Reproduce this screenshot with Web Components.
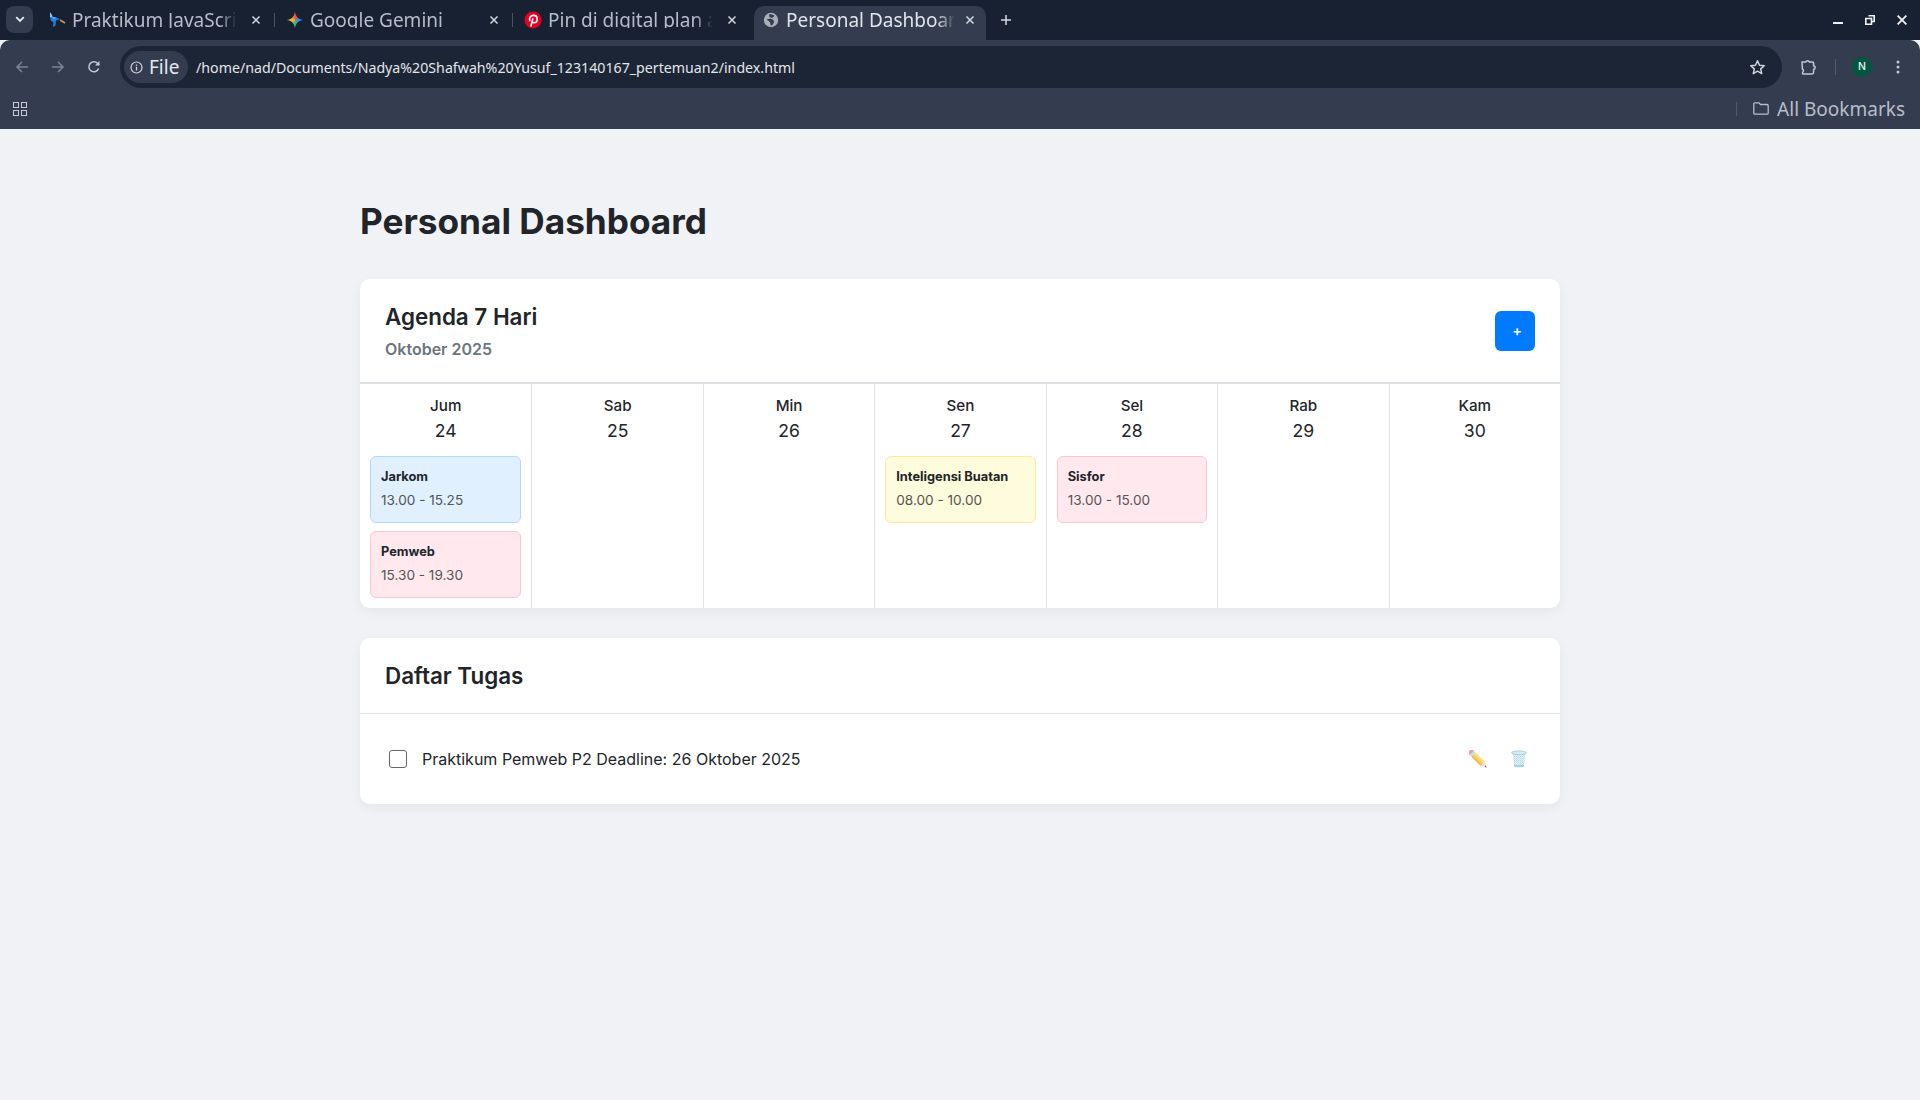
<!DOCTYPE html>
<html lang="id"><head><meta charset="utf-8"><title>Personal Dashboard</title>
<style>
html,body{margin:0;padding:0;height:100%;background:#f0f2f5}
body{width:1920px;height:1100px;overflow:hidden;display:flex;flex-direction:column;font-family:Inter,"Liberation Sans",sans-serif}
browser-tabs,browser-toolbar,bookmark-bar{flex:none}
dash-page{flex:1}
</style></head><body>
<browser-tabs></browser-tabs>
<browser-toolbar></browser-toolbar>
<bookmark-bar></bookmark-bar>
<dash-page>
  <agenda-card>
    <day-col name="Jum" num="24" first>
      <event-card tone="blue" title-text="Jarkom" time="13.00 - 15.25"></event-card>
      <event-card tone="pink" title-text="Pemweb" time="15.30 - 19.30"></event-card>
    </day-col>
    <day-col name="Sab" num="25"></day-col>
    <day-col name="Min" num="26"></day-col>
    <day-col name="Sen" num="27">
      <event-card tone="yellow" title-text="Inteligensi Buatan" time="08.00 - 10.00"></event-card>
    </day-col>
    <day-col name="Sel" num="28">
      <event-card tone="pink" title-text="Sisfor" time="13.00 - 15.00"></event-card>
    </day-col>
    <day-col name="Rab" num="29"></day-col>
    <day-col name="Kam" num="30"></day-col>
  </agenda-card>
  <task-card>
    <task-item text="Praktikum Pemweb P2 Deadline: 26 Oktober 2025"></task-item>
  </task-card>
</dash-page>
<script>
function def(name, html, init){
  customElements.define(name, class extends HTMLElement{
    constructor(){super();this.attachShadow({mode:'open'});}
    connectedCallback(){
      this.shadowRoot.innerHTML = typeof html==='function'?html(this):html;
      if(init)init(this);
    }
  });
}
const attr=(e,n)=>e.getAttribute(n)||'';

const closeX=`<svg width="10" height="10" viewBox="0 0 10 10"><path d="M1.500 1.500l7 7M8.500 1.500l-7 7" stroke="currentColor" stroke-width="1.500" fill="none"/></svg>`;
const favs={
 js:`<svg width="18" height="18" viewBox="0 0 18 18"><path d="M2 1l2 3 .5 2L2 6z" fill="#8ec8f2"/><path d="M2 6h5l5 2-4 1.500-.5 5-2.500 1.500 .5-5L3 10z" fill="#1f82e6"/><path d="M3.500 5.500L8 6.500 6 8.500z" fill="#5fb2f2"/><path d="M12 9l5 3" stroke="#c39b3e" stroke-width="1.800"/></svg>`,
 gem:`<span style="display:block;width:17px;height:17px;background:conic-gradient(from 0deg,#e8503f 0deg,#3f86f0 70deg,#2f9be8 130deg,#3fb56a 190deg,#8cc04c 230deg,#f2b73a 280deg,#f0883a 320deg,#e8503f 360deg);clip-path:path('M8.500 0C9 5 12 8 17 8.500 12 9 9 12 8.500 17 8 12 5 9 0 8.500 5 8 8 5 8.500 0z')"></span>`,
 pin:`<svg width="18" height="18" viewBox="0 0 18 18"><circle cx="9" cy="9" r="8.500" fill="#e60023"/><path d="M7 15l1.700-7M5.800 9.600C4.800 6.700 6.800 4.400 9.300 4.400c2.400 0 3.900 1.600 3.900 3.600 0 2.200-1.300 3.800-3 3.800-.9 0-1.600-.6-1.700-1.300" stroke="#fff" stroke-width="1.600" fill="none" stroke-linecap="round"/></svg>`,
 globe:`<svg width="16" height="16" viewBox="0 0 16 16"><circle cx="8" cy="8" r="7.200" fill="#a9afba"/><path d="M6 2.500c2.500-.5 4.500.5 5.500 1.500L9 6 6.500 5zM3.500 7.500l4-1 3 1.500.5 2.500-2 3-1.500-.5-.5-3z" fill="#343d4f"/></svg>`};
def('browser-tab', e=>`<style>
:host{display:flex;align-items:center;flex:none;height:34px;padding-bottom:6px;box-sizing:border-box;position:relative;color:#b6bcc8}
:host([active]){background:#343d4f;border-radius:10px 10px 0 0;color:#dfe3ea}
:host([active]) .x{margin-left:10px}
.f{flex:none;width:18px;height:18px;display:flex;align-items:center;justify-content:center;margin-right:6px}
.t{flex:1;min-width:0;height:16px;overflow:hidden;white-space:nowrap;font:19px/16px "Noto Sans",sans-serif;-webkit-mask-image:linear-gradient(90deg,#000 calc(100% - 18px),transparent 100%);mask-image:linear-gradient(90deg,#000 calc(100% - 18px),transparent 100%)}
.x{flex:none;width:10px;height:10px;display:flex;color:#d4d8e0;margin-left:14px}
</style><span class="f">${favs[attr(e,'fav')]}</span><span class="t">${attr(e,'label')}</span><span class="x">${closeX}</span>`);

def('browser-tabs',`<style>
:host{display:flex;height:40px;background:#182132;box-sizing:border-box;padding:6px 13px 0 6px;align-items:flex-start;position:relative}
.sw{width:27px;height:27px;border-radius:8px;background:#343d4f;display:flex;align-items:center;justify-content:center;flex:none;margin-right:15px;color:#e6e9ef}
.sep{flex:none;width:1px;height:14px;background:#4a5262;margin-top:7px}
browser-tab{height:34px}
.t1{width:213px;margin-right:13px}.t2{width:213px;margin-left:11px;margin-right:13px}.t3{width:213px;margin-left:11px;margin-right:17px}
.t4{width:232px;padding-left:8px;padding-right:11px}
.plus{flex:none;margin:8px 0 0 14px;color:#d4d8e0;display:flex}
.grow{flex:1}
.wc{display:flex;align-items:center;gap:22px;margin-top:7px;color:#f2f4f7;height:14px}
</style>
<div class="sw"><svg width="10" height="7" viewBox="0 0 10 7"><path d="M1.200 1.200L5 5l3.800-3.800" fill="none" stroke="currentColor" stroke-width="1.800"/></svg></div>
<browser-tab class="t1" fav="js" label="Praktikum JavaScript"></browser-tab><span class="sep"></span>
<browser-tab class="t2" fav="gem" label="Google Gemini"></browser-tab><span class="sep"></span>
<browser-tab class="t3" fav="pin" label="Pin di digital plan app"></browser-tab>
<browser-tab class="t4" active fav="globe" label="Personal Dashboard"></browser-tab>
<span class="plus"><svg width="12" height="12" viewBox="0 0 12 12"><path d="M6 1v10M1 6h10" stroke="currentColor" stroke-width="1.500"/></svg></span>
<span class="grow"></span>
<span class="wc">
<svg width="10" height="10" viewBox="0 0 10 10"><path d="M0 8h10" stroke="currentColor" stroke-width="2"/></svg>
<svg width="10" height="10" viewBox="0 0 10 10"><path d="M3.500.8h5.700v5.700H6.500M.8 3.500h5.700v5.700H.8z" fill="none" stroke="currentColor" stroke-width="1.600"/></svg>
<svg width="10" height="10" viewBox="0 0 10 10"><path d="M.6.600l8.800 8.800M9.400.600L.6 9.400" stroke="currentColor" stroke-width="1.800"/></svg>
</span>`);

def('browser-toolbar',`<style>
:host{display:flex;align-items:center;height:48px;box-sizing:border-box;padding:6px 0 0 0;background:#343d4f;border-radius:10px 10px 0 0;font-family:"Noto Sans",sans-serif}
.nav{flex:none;width:36px;display:flex;justify-content:center;color:#7d8594}
.nav.r{color:#c4c9d3}
.lead{flex:none;width:4px}
.omni{flex:1;margin-left:8px;height:42px;background:#1c2535;border-radius:21px;display:flex;align-items:center;box-sizing:border-box;padding:0 16px 0 4px;min-width:0}
.chip{flex:none;display:flex;align-items:center;gap:6px;height:32px;width:64px;box-sizing:border-box;padding-left:6px;border-radius:16px;background:#343d4f;color:#e6e9ef;font-size:19px}
.url{flex:1;margin-left:8px;color:#e3e6ec;font-size:14.2px;white-space:nowrap}
.end{flex:none;display:flex;align-items:center;color:#c4c9d3;width:138px}
.pz{margin-left:18px;display:flex}.s{width:1px;height:16px;background:#535b6b;margin-left:18px}
.av{width:20px;height:20px;border-radius:50%;background:#03563f;color:#e6f2ee;font:500 10.500px/20px Inter,sans-serif;text-align:center;margin-left:16px}
.dots{margin-left:24px;display:flex}
</style>
<span class="lead"></span>
<span class="nav"><svg width="14" height="14" viewBox="0 0 14 14"><path d="M13 7H2M7 2L2 7l5 5" fill="none" stroke="currentColor" stroke-width="1.500"/></svg></span>
<span class="nav"><svg width="14" height="14" viewBox="0 0 14 14"><path d="M1 7h11M7 2l5 5-5 5" fill="none" stroke="currentColor" stroke-width="1.500"/></svg></span>
<span class="nav r"><svg width="14" height="14" viewBox="0 0 14 14"><path d="M11.600 8.500A5 5 0 1 1 10.500 3.300L12 5" fill="none" stroke="currentColor" stroke-width="1.500"/><path d="M12.500 1v4.500H8z" fill="currentColor"/></svg></span>
<div class="omni">
 <span class="chip"><svg width="13" height="13" viewBox="0 0 13 13"><circle cx="6.500" cy="6.500" r="5.500" fill="none" stroke="#d0d4dc" stroke-width="1.200"/><path d="M6.500 5.800v3.700M6.500 3.400v1.300" stroke="#d0d4dc" stroke-width="1.300"/></svg><span>File</span></span>
 <span class="url">/home/nad/Documents/Nadya%20Shafwah%20Yusuf_123140167_pertemuan2/index.html</span>
 <svg width="17" height="17" viewBox="0 0 17 17" style="flex:none"><path d="M8.500 1.800l2 4.400 4.800.5-3.600 3.200 1 4.700-4.200-2.400-4.200 2.400 1-4.700L1.700 6.700l4.800-.5z" fill="none" stroke="#d0d4dc" stroke-width="1.500" stroke-linejoin="round"/></svg>
</div>
<div class="end">
 <span class="pz"><svg width="17" height="17" viewBox="0 0 17 17"><path d="M2 3h3.800a1.900 1.900 0 0 1 3.600 0h3a1.200 1.200 0 0 1 1.200 1.200V7a1.600 1.600 0 0 1 0 3.200v3.100a1.700 1.700 0 0 1-1.700 1.700H3.200a1.200 1.200 0 0 1-.5-1.800C3.800 12 3.600 10.500 2.400 10z" fill="none" stroke="currentColor" stroke-width="1.500" stroke-linejoin="round"/></svg></span>
 <span class="s"></span><span class="av">N</span>
 <span class="dots"><svg width="4" height="14" viewBox="0 0 4 14"><circle cx="2" cy="2" r="1.500" fill="currentColor"/><circle cx="2" cy="7" r="1.500" fill="currentColor"/><circle cx="2" cy="12" r="1.500" fill="currentColor"/></svg></span>
</div>`);

def('bookmark-bar',`<style>
:host{display:flex;align-items:center;height:41px;background:#343d4f;box-sizing:border-box;padding:0 15px 0 13px;color:#b8bdc9;font-family:"Noto Sans",sans-serif}
.g{display:grid;grid-template-columns:6px 6px;gap:2px;flex:none}.g i{display:block;width:4px;height:4px;border:1px solid #c4c9d3}
.grow{flex:1}
.s{width:1px;height:14px;background:#535b6b;margin-right:16px}
.fold{display:flex;margin-right:8px}
.l{font-size:19px;line-height:26px;white-space:nowrap}
</style><span class="g"><i></i><i></i><i></i><i></i></span><span class="grow"></span><span class="s"></span>
<span class="fold"><svg width="16" height="13" viewBox="0 0 16 13"><path d="M.8 2A1.200 1.200 0 0 1 2 .8h4l1.500 1.700H14A1.200 1.200 0 0 1 15.200 3.700V11A1.200 1.200 0 0 1 14 12.200H2A1.200 1.200 0 0 1 .8 11z" fill="none" stroke="currentColor" stroke-width="1.300"/></svg></span><span class="l">All Bookmarks</span>`);

def('dash-page',`<style>
:host{display:block;background:#f0f2f5;color:#212529;font-family:Inter,sans-serif}
.wrap{width:1200px;margin:0 auto;padding-top:70px;display:flex;flex-direction:column}
h1{margin:0 0 36px;font-size:35.2px;font-weight:700;line-height:44px;color:#212529}
::slotted(agenda-card){margin-bottom:30px}
</style><div class="wrap"><h1>Personal Dashboard</h1><slot></slot></div>`);

const cardBase=`display:block;background:#fff;border-radius:10px;box-shadow:0 4px 12px rgba(0,0,0,.05);overflow:hidden;`;
def('agenda-card',`<style>
:host{${cardBase}}
header{display:flex;justify-content:space-between;align-items:center;height:103px;padding:0 25px;border-bottom:2px solid #dee2e6}
.tt{padding-top:2px}
h2{margin:0 0 6px;font-size:22.4px;font-weight:600;line-height:29px;color:#212529}
p{margin:0;font-size:16px;font-weight:600;line-height:24px;color:#6c757d}
button{width:40px;height:40px;border:0;border-radius:6px;background:#007bff;color:#fff;font:600 14.4px/40px Inter,sans-serif;padding:0 0 0 4px}
.grid{display:grid;grid-template-columns:repeat(7,1fr);height:224px}
</style><header><div class="tt"><h2>Agenda 7 Hari</h2><p>Oktober 2025</p></div><button>+</button></header><div class="grid"><slot></slot></div>`);

def('day-col',e=>`<style>
:host{display:flex;flex-direction:column;box-sizing:border-box;padding:10px;min-width:0;border-left:1px solid #dee2e6;gap:8px}
:host([first]){border-left:0}
.h{text-align:center;margin-bottom:2px;height:52px}
.n{font-size:15.2px;font-weight:500;line-height:24px;color:#212529}
.d{font-size:17.6px;font-weight:400;line-height:26px;color:#212529}
</style><div class="h"><div class="n">${attr(e,'name')}</div><div class="d">${attr(e,'num')}</div></div><slot></slot>`);

const tones={blue:['#e0f0ff','#b3d7ff'],pink:['#ffe9ef','#ffc2d1'],yellow:['#fffbdd','#ffe89e']};
def('event-card',e=>{const t=tones[attr(e,'tone')];return `<style>
:host{display:block;box-sizing:border-box;height:67px;padding:10px;background:${t[0]};border:1px solid ${t[1]};border-radius:6px}
.a{font-size:12.8px;font-weight:700;line-height:20px;color:#212529;white-space:nowrap}
.b{font-size:13.6px;line-height:22px;margin-top:2px;color:#555}
</style><div class="a">${attr(e,'title-text')}</div><div class="b">${attr(e,'time')}</div>`});

def('task-card',`<style>
:host{${cardBase}}
header{height:76px;box-sizing:border-box;padding:0 25px;display:flex;align-items:center;border-bottom:1px solid #dee2e6}
h2{margin:0;font-size:22.4px;font-weight:600;line-height:29px;color:#212529}
.body{height:90px;padding:0 25px;display:flex;align-items:center}
::slotted(task-item){flex:1}
</style><header><h2>Daftar Tugas</h2></header><div class="body"><slot></slot></div>`);

def('task-item',e=>`<style>
:host{display:flex;align-items:center;font-size:16px;color:#212529}
input{appearance:none;-webkit-appearance:none;flex:none;width:18px;height:18px;margin:0 15px 0 4px;background:#fff;border:1px solid #666;border-radius:3px;box-sizing:border-box}
.t{flex:1;line-height:24px;margin-top:-1px}
.a{flex:none;display:flex;gap:22px;margin-right:7px;align-items:center}
svg{display:block}
</style><input type="checkbox"><span class="t">${attr(e,'text')}</span>
<span class="a">
<svg width="19" height="19" viewBox="0 0 19 19"><g transform="rotate(45 9.500 9.500)"><rect x="-3" y="6.500" width="3.500" height="6" rx="1.500" fill="#f09a9a"/><rect x="0" y="6.500" width="2.500" height="6" fill="#bfe0ea"/><rect x="2.500" y="6.500" width="13" height="2" fill="#fde08a"/><rect x="2.500" y="8.500" width="13" height="2" fill="#fbcf5c"/><rect x="2.500" y="10.500" width="13" height="2" fill="#f2b544"/><path d="M15.500 6.500l5 3-5 3z" fill="#f3e2bf"/><path d="M19 8.600l2 .900-2 .900z" fill="#666"/></g></svg>
<svg width="18" height="18" viewBox="0 0 18 18"><defs><pattern id="m" width="2" height="2" patternUnits="userSpaceOnUse"><rect width="2" height="2" fill="#e6f2f6"/><rect width="1" height="1" fill="#b5d5e0"/><rect x="1" y="1" width="1" height="1" fill="#c8e0e8"/></pattern></defs><path d="M2.500 3l1.600 13c.1.800 1 1.300 1.800 1.300h6.200c.8 0 1.700-.5 1.800-1.300L15.500 3z" fill="url(#m)"/><path d="M3.900 14.500c2 1 8.200 1 10.200 0l-.2 1.800c-1 1.200-8.800 1.200-9.800 0z" fill="#a6cddb"/><ellipse cx="9" cy="2.800" rx="7.500" ry="1.800" fill="#d8ebf1" stroke="#a9cfdc" stroke-width="1"/></svg>
</span>`);
</script>
</body></html>
